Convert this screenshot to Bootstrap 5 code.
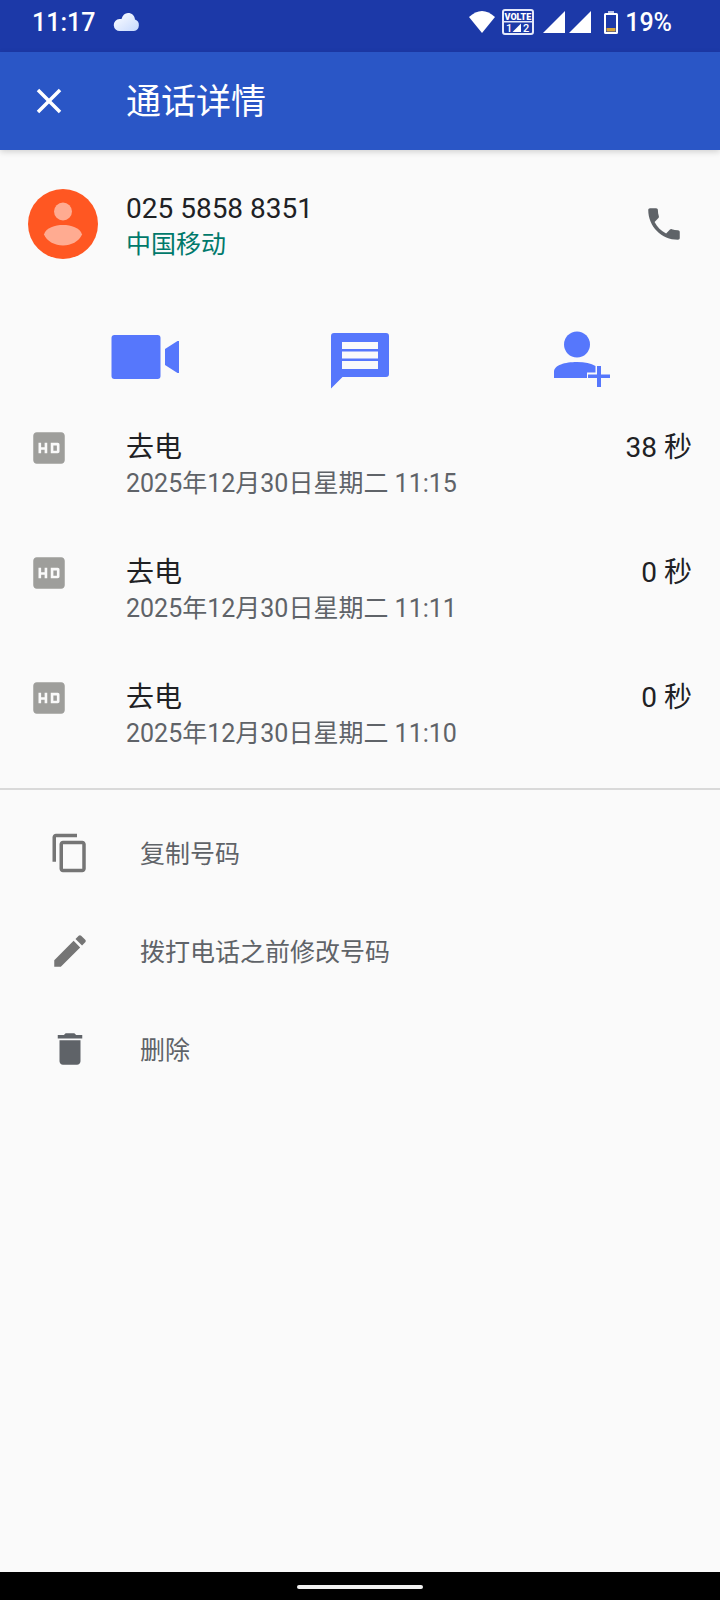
<!DOCTYPE html>
<html lang="zh-CN">
<head>
<meta charset="utf-8">
<meta name="viewport" content="width=device-width, initial-scale=1">
<title>通话详情</title>
<link href="https://cdn.jsdelivr.net/npm/bootstrap@5.3.0/dist/css/bootstrap.min.css" rel="stylesheet">
<style>
  body { font-family: Roboto, "Noto Sans CJK SC", sans-serif; background: #fafafa; color: #202124; }
  svg { display: block; flex: none; }
  button { color: inherit; }
  .status-bar { height: 52px; background: #1c39a8; padding: 0 48px 6px 32px; font-size: 25px; line-height: 36px; font-weight: 500; }
  .cloud-icon { margin-left: 18px; }
  .app-bar { height: 98px; background: #2a56c6; padding: 0 28px; box-shadow: 0 2px 6px rgba(0,0,0,.16); }
  .app-title { font-size: 35px; line-height: 42px; font-weight: 400; padding-top: 4px; }
  .lead-cell { width: 98px; flex: none; }
  .contact { height: 148px; padding: 0 35px 0 28px; }
  .contact-text { padding-top: 6px; }
  .text-main { font-size: 28px; line-height: 42px; font-weight: 400; }
  .text-sub { font-size: 25px; line-height: 30px; color: #5f6368; }
  .contact-text > * { line-height: 36px; }
  .text-carrier { color: #00796b; }
  .actions { height: 104px; padding: 32px 37px 0; }
  .call-row { padding: 25px 28px 28px; }
  .call-list { padding-bottom: 11px; border-bottom: 2px solid #d9d9d9; }
  .menu-list { padding-top: 14px; }
  .menu-row { height: 98px; padding: 0 49px; gap: 49px; }
  .menu-row .text-sub { padding-top: 4px; }
  .gray { color: #757575; }
  .slate { color: #5f6368; }
  .nav-strip { height: 28px; background: #000; padding-top: 2px; }
  .nav-pill { width: 126px; height: 4px; background: #f1f1f1; }
</style>
</head>
<body class="d-flex flex-column min-vh-100">

<div class="status-bar d-flex align-items-center justify-content-between text-white">
  <div class="d-flex align-items-center">
    <span>11:17</span>
    <svg class="cloud-icon" width="28" height="24" viewBox="0 2 28 24" aria-hidden="true">
      <defs><linearGradient id="cloud" x1="0" y1="0" x2="1" y2="1"><stop offset="0" stop-color="#fff"/><stop offset="1" stop-color="#c5d8fd"/></linearGradient></defs>
      <path fill="url(#cloud)" d="M7 22a5.800 5.800 0 0 1-.5-12 5.500 5.500 0 0 1 2 0C9.500 6 12 4 15 4c4 0 6.500 2.500 7 6.500a6 6 0 0 1-1 11.500z"/>
    </svg>
  </div>
  <div class="d-flex align-items-center">
    <svg width="150" height="28" viewBox="467 7 150 28" overflow="visible" fill="#fff" aria-label="WiFi, VoLTE">
      <path d="M469 15Q482 3 495 15L482 31Z"/>
      <rect x="503" y="8" width="30" height="24" rx="2" fill="none" stroke="#e4e9fa" stroke-width="2"/>
      <path fill="#e4e9fa" d="M503 19h30v1.500h-30z"/>
      <text x="504.500" y="17.500" font-family="Roboto" font-size="9" font-weight="900">VOLTE</text>
      <text x="506" y="30" font-family="Roboto" font-size="11">1</text>
      <text x="523" y="30" font-family="Roboto" font-size="11">2</text>
      <path d="M521 21.500V30h-8.500z"/>
      <path d="M565 9v22h-22z M591 9v22h-22z"/>
      <rect x="605" y="12" width="12" height="19" rx=".5" fill="none" stroke="#fff" stroke-width="2"/>
      <path fill="#b9c4ec" d="M608 9h6v2h-6z"/>
      <path fill="#d8a63a" d="M606.500 26h9v3.500h-9z"/>
    </svg>
    <span class="ms-2">19%</span>
  </div>
</div>

<header class="app-bar d-flex align-items-center text-white">
  <div class="lead-cell">
    <button type="button" class="btn p-0 border-0 text-white" aria-label="关闭">
      <svg width="42" height="42" viewBox="0 0 24 24" fill="currentColor"><path d="M19 6.410L17.590 5 12 10.590 6.410 5 5 6.410 10.590 12 5 17.590 6.410 19 12 13.410 17.590 19 19 17.590 13.410 12z"/></svg>
    </button>
  </div>
  <h1 class="app-title mb-0">通话详情</h1>
</header>

<main class="flex-grow-1">
  <section class="contact d-flex align-items-center">
    <div class="lead-cell">
      <svg width="70" height="70" viewBox="0 0 70 70" aria-hidden="true">
        <circle cx="35" cy="35" r="35" fill="#ff5722"/>
        <circle cx="35" cy="22.500" r="9" fill="#ffab91"/>
        <path fill="#ffab91" d="M16 45.500C18 38.500 27 36 35 36s17 2.500 19 9.500c-3 7-11 11-19 11s-16-4-19-11z"/>
      </svg>
    </div>
    <div class="contact-text flex-grow-1">
      <h2 class="text-main m-0">025 5858 8351</h2>
      <div class="text-sub text-carrier">中国移动</div>
    </div>
    <button type="button" class="btn p-0 border-0 slate" aria-label="拨打电话">
      <svg width="42" height="42" viewBox="0 0 24 24" fill="currentColor"><path d="M6.620 10.790c1.440 2.830 3.760 5.140 6.590 6.590l2.200-2.200c.27-.27.67-.36 1.020-.24 1.120.37 2.330.57 3.570.57.55 0 1 .45 1 1V20c0 .55-.45 1-1 1-9.390 0-17-7.610-17-17 0-.55.45-1 1-1h3.500c.55 0 1 .45 1 1 0 1.250.2 2.450.57 3.570.11.35.03.74-.25 1.020l-2.200 2.200z"/></svg>
    </button>
  </section>

  <section class="actions">
    <div class="row g-0">
      <div class="col d-flex justify-content-center">
        <button type="button" class="btn p-0 border-0" aria-label="视频通话">
          <svg width="68" height="60" viewBox="111 330 68 60" fill="#5677fc"><rect x="111.500" y="335" width="49" height="44" rx="3"/><path d="M165 349l12.500-8H179v32h-1.500L165 365z"/></svg>
        </button>
      </div>
      <div class="col d-flex justify-content-center">
        <button type="button" class="btn p-0 border-0" aria-label="发送短信">
          <svg width="58" height="60" viewBox="331 330 58 60" fill="#5677fc"><path fill-rule="evenodd" d="M334 333h52a3 3 0 0 1 3 3v38a3 3 0 0 1-3 3h-43.500L331 388.500V336a3 3 0 0 1 3-3zM342 342v7h36v-7zM342 351.500v7h36v-7zM342 361v8h36v-8z"/></svg>
        </button>
      </div>
      <div class="col d-flex justify-content-center">
        <button type="button" class="btn p-0 border-0" aria-label="添加联系人">
          <svg width="68" height="60" viewBox="541 330 68 60" overflow="visible" fill="#5677fc"><circle cx="577" cy="344.500" r="13"/><path d="M554 378v-6c0-7 11-10 23-10 8 0 14 1.500 18.500 4v6.500h-8.500v5.500z"/><path d="M597 366h4v8.500h9v3.500h-9v9h-4v-9h-9v-3.500h9z"/></svg>
        </button>
      </div>
    </div>
  </section>

  <section class="call-list">
    <svg width="0" height="0" class="d-none"><symbol id="hd" viewBox="0 0 24 24"><path fill="#9e9e9b" d="M19 3H5c-1.110 0-2 .9-2 2v14c0 1.100.89 2 2 2h14c1.100 0 2-.9 2-2V5c0-1.100-.9-2-2-2zm-8 12H9.500v-2h-2v2H6V9h1.500v2.500h2V9H11v6zm2-6h4c.55 0 1 .45 1 1v4c0 .55-.45 1-1 1h-4V9zm1.500 4.500h2v-3h-2v3z"/></symbol></svg>
    <div class="call-row d-flex">
      <div class="lead-cell"><svg width="42" height="42" aria-label="HD"><use href="#hd"/></svg></div>
      <div class="flex-grow-1"><div class="text-main">去电</div><div class="text-sub">2025年12月30日星期二 11:15</div></div>
      <div class="text-main">38 秒</div>
    </div>
    <div class="call-row d-flex">
      <div class="lead-cell"><svg width="42" height="42" aria-label="HD"><use href="#hd"/></svg></div>
      <div class="flex-grow-1"><div class="text-main">去电</div><div class="text-sub">2025年12月30日星期二 11:11</div></div>
      <div class="text-main">0 秒</div>
    </div>
    <div class="call-row d-flex">
      <div class="lead-cell"><svg width="42" height="42" aria-label="HD"><use href="#hd"/></svg></div>
      <div class="flex-grow-1"><div class="text-main">去电</div><div class="text-sub">2025年12月30日星期二 11:10</div></div>
      <div class="text-main">0 秒</div>
    </div>
  </section>

  <section class="menu-list">
    <button type="button" class="menu-row btn border-0 rounded-0 w-100 d-flex align-items-center text-start">
      <svg class="gray" width="42" height="42" viewBox="0 0 24 24" fill="currentColor"><path d="M16 1H4c-1.100 0-2 .9-2 2v14h2V3h12V1zm3 4H8c-1.100 0-2 .9-2 2v14c0 1.100.9 2 2 2h11c1.100 0 2-.9 2-2V7c0-1.100-.9-2-2-2zm0 16H8V7h11v14z"/></svg>
      <span class="text-sub">复制号码</span>
    </button>
    <button type="button" class="menu-row btn border-0 rounded-0 w-100 d-flex align-items-center text-start">
      <svg class="gray" width="42" height="42" viewBox="0 0 24 24" fill="currentColor"><path d="M3 17.250V21h3.750L17.810 9.940l-3.750-3.750L3 17.250zM20.710 7.040c.39-.39.39-1.020 0-1.410l-2.340-2.340c-.39-.39-1.020-.39-1.410 0l-1.830 1.830 3.750 3.750 1.830-1.830z"/></svg>
      <span class="text-sub">拨打电话之前修改号码</span>
    </button>
    <button type="button" class="menu-row btn border-0 rounded-0 w-100 d-flex align-items-center text-start">
      <svg class="slate" width="42" height="42" viewBox="0 0 24 24" fill="currentColor"><path d="M6 19c0 1.100.9 2 2 2h8c1.100 0 2-.9 2-2V7H6v12zM19 4h-3.500l-1-1h-5l-1 1H5v2h14V4z"/></svg>
      <span class="text-sub">删除</span>
    </button>
  </section>
</main>

<footer class="nav-strip d-flex align-items-center justify-content-center">
  <div class="nav-pill rounded-pill"></div>
</footer>

<script src="https://cdn.jsdelivr.net/npm/bootstrap@5.3.0/dist/js/bootstrap.bundle.min.js"></script>
</body>
</html>
